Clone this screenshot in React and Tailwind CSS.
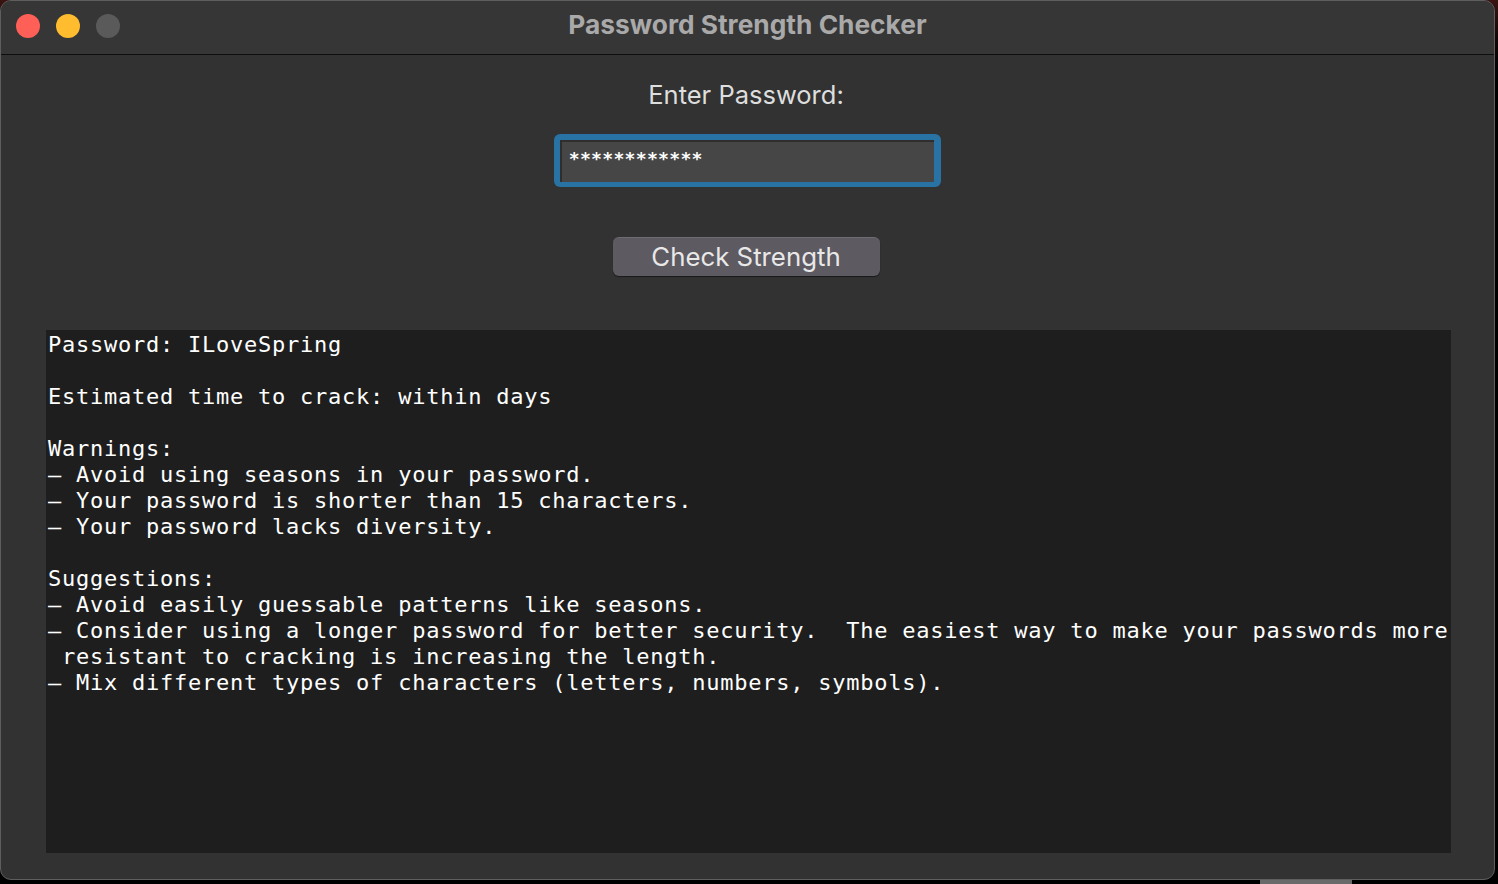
import React from "react";

const lines = [
  "Password: ILoveSpring",
  "",
  "Estimated time to crack: within days",
  "",
  "Warnings:",
  "– Avoid using seasons in your password.",
  "– Your password is shorter than 15 characters.",
  "– Your password lacks diversity.",
  "",
  "Suggestions:",
  "– Avoid easily guessable patterns like seasons.",
  "– Consider using a longer password for better security.  The easiest way to make your passwords more",
  " resistant to cracking is increasing the length.",
  "– Mix different types of characters (letters, numbers, symbols).",
];

export default function App() {
  return (
    <div className="w-[1498px] h-[884px] bg-[linear-gradient(to_bottom,#3a1410_0px,#120505_40px,#000_80px)] overflow-hidden relative">
      <div className="w-[1495px] h-[880px] rounded-[11px] border border-[#5e5e5e] bg-[#323232] overflow-hidden flex flex-col">
        <div className="h-[54px] shrink-0 bg-[#363636] border-b border-[#0e0e0e] grid grid-cols-[1fr_auto_1fr] items-center pb-[4px]">
          <div className="flex items-center gap-[16px] pl-[15px]">
            <div className="w-[24px] h-[24px] rounded-full bg-[#fe5f57]" />
            <div className="w-[24px] h-[24px] rounded-full bg-[#febc2e]" />
            <div className="w-[24px] h-[24px] rounded-full bg-[#5a5a5a]" />
          </div>
          <div className="text-[26.3px] font-bold text-[#a9a9a9] leading-none" style={{ fontFamily: "Inter, 'Noto Sans', sans-serif" }}>
            Password Strength Checker
          </div>
          <div />
        </div>
        <div className="flex-1 flex flex-col items-center" style={{ fontFamily: "Inter, 'Noto Sans', sans-serif" }}>
          <div className="mt-[25px] mr-[3px] h-[30px] leading-[30px] text-[25.5px] text-[#dedede]">Enter Password:</div>
          <div className="mt-[24px] mr-[1px] w-[387px] h-[53px] rounded-[6px] bg-[#2872a4] p-[6px] pb-[5px] pr-[7px]">
            <div className="w-full h-full bg-[#464646] border-t-2 border-l-2 border-[#2e2e2e] flex items-start pl-[8px] pt-[8px]">
              <span className="text-white font-bold text-[18px] leading-[18px] tracking-[1.75px]" style={{ fontFamily: "'DejaVu Sans', sans-serif" }}>
                ************
              </span>
            </div>
          </div>
          <button className="mt-[50px] mr-[3px] w-[267px] h-[39px] rounded-[6px] bg-[#5d5a62] border-t border-[#6e6b73] shadow-[0_1px_1px_rgba(0,0,0,0.5)] text-[25.8px] text-[#e8e8e8] leading-none flex items-center justify-center pb-[1px]">
            Check Strength
          </button>
          <div className="mt-[54px] self-stretch ml-[45px] mr-[43px] h-[523px] bg-[#1e1e1e] pt-[2px] pl-[2px]">
            <div
              className="text-[22px] leading-[26px] tracking-[0.76px] text-white whitespace-pre"
              style={{ fontFamily: "'DejaVu Sans Mono', 'Liberation Mono', monospace" }}
            >
              {lines.map((l, i) => (
                <div key={i} className="h-[26px]">{l}</div>
              ))}
            </div>
          </div>
        </div>
      </div>
      <div className="absolute left-[1260px] top-[880px] w-[92px] h-[4px] bg-[#6a6a6a]" />
    </div>
  );
}
